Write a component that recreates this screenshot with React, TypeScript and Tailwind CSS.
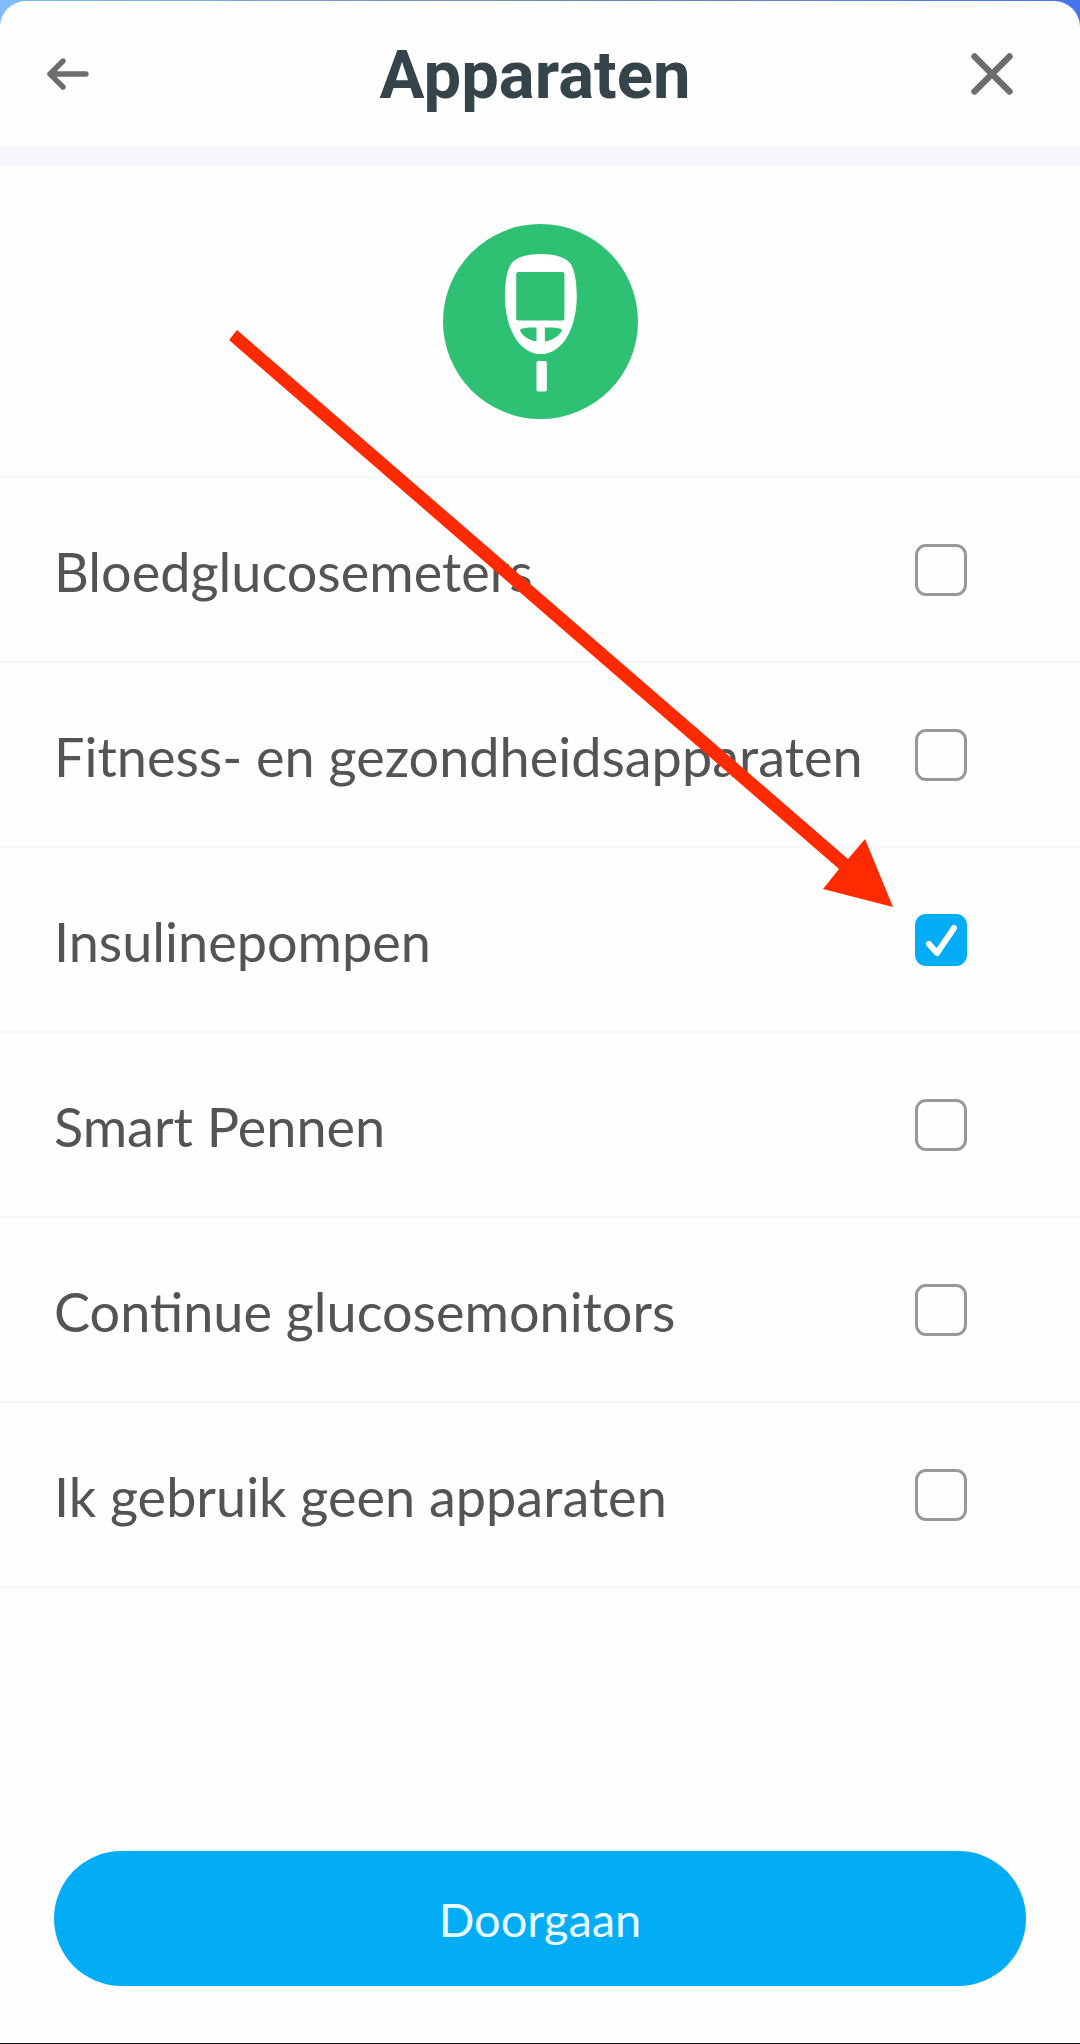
import { useState } from "react";

const devices = [
  { id: "meters", label: "Bloedglucosemeters" },
  { id: "fitness", label: "Fitness- en gezondheidsapparaten" },
  { id: "pumps", label: "Insulinepompen" },
  { id: "pens", label: "Smart Pennen" },
  { id: "cgm", label: "Continue glucosemonitors" },
  { id: "none", label: "Ik gebruik geen apparaten" },
];

function BackIcon() {
  return (
    <svg
      className="w-[42px] h-8"
      viewBox="0 0 42 32"
      fill="none"
      stroke="#6d6d6d"
      strokeWidth="5.4"
      strokeLinecap="round"
      strokeLinejoin="round"
    >
      <path d="M39 16H3M16 3L3 16l13 13" />
    </svg>
  );
}

function CloseIcon() {
  return (
    <svg
      className="size-[42px]"
      viewBox="0 0 42 42"
      fill="none"
      stroke="#6d6d6d"
      strokeWidth="6.4"
      strokeLinecap="round"
    >
      <path d="M3.5 3.5l35 35M38.5 3.5l-35 35" />
    </svg>
  );
}

function MeterIcon() {
  return (
    <svg
      className="size-[195px]"
      viewBox="36 41 586 586"
      fill="#fff"
    >
      <circle cx="329" cy="334" r="293" fill="#2fc173" />
      <path d="M330 131c-46 0-79 11-92 34-11 20-16 58-16 94 0 48 12 98 34 129 20 29 46 44 74 44s54-15 74-44c22-31 34-81 34-129 0-36-5-74-16-94-13-23-46-34-92-34z" />
      <rect x="256" y="185" width="145" height="146" rx="6" fill="#2fc173" />
      <path
        d="M317 352v42c-21-3-39-14-48-30-3-5-1-8 5-9 13-3 27-3 43-3zM342 352v42c21-3 40-14 50-30 3-5 1-8-5-9-13-3-28-3-45-3z"
        fill="#2fc173"
      />
      <rect x="317" y="453" width="31" height="91" rx="5" />
    </svg>
  );
}

function PointerArrow() {
  return (
    <svg
      className="absolute left-[229px] top-[330px] w-[664px] h-[577px] pointer-events-none"
      viewBox="229 330 664 577"
      fill="#ff2a00"
    >
      <path d="M237 330L848 859l17-20 28 68-70-18 16-20L229 340z" />
    </svg>
  );
}

export default function App() {
  const [selected, setSelected] = useState(["pumps"]);

  const toggle = (id: string) =>
    setSelected((prev) =>
      prev.includes(id) ? prev.filter((x) => x !== id) : [...prev, id]
    );

  return (
    <div className="relative min-h-screen flex flex-col pt-px bg-linear-to-r from-[#7fbcfb] via-[#7489a8] to-[#4773ee] font-['Lato',sans-serif] text-[#545454]">
      <main className="flex-1 flex flex-col bg-[#fefefe] rounded-t-[26px] border-b border-[#111]">
        <header className="h-[145px] flex items-center justify-between pl-[47px] pr-[67px]">
          <button type="button" aria-label="Terug" className="w-[52px]">
            <BackIcon />
          </button>
          <h1 className="pt-1 text-[67px] leading-none font-bold font-['Roboto',sans-serif] text-[#35434a]">
            Apparaten
          </h1>
          <button type="button" aria-label="Sluiten">
            <CloseIcon />
          </button>
        </header>
        <div className="h-5 bg-[#f6f6fb]" />
        <div className="flex justify-center pt-[58px] pb-[57px] border-b-2 border-[#f7f7f7]">
          <MeterIcon />
        </div>
        <ul>
          {devices.map(({ id, label }) => (
            <li key={id} className="border-b-2 border-[#f7f7f7]">
              <label
                htmlFor={id}
                className="h-[183px] flex items-center justify-between pl-[54px] pr-[113px] text-[54px] leading-none"
              >
                <span className="pt-1">{label}</span>
                <span className="relative size-[52px] shrink-0">
                  <input
                    id={id}
                    type="checkbox"
                    checked={selected.includes(id)}
                    onChange={() => toggle(id)}
                    className="peer block size-[52px] appearance-none rounded-[11px] border-3 border-[#989898] checked:border-[#03adf5] checked:bg-[#03adf5]"
                  />
                  <svg
                    className="absolute inset-0 hidden peer-checked:block pointer-events-none"
                    viewBox="0 0 52 52"
                    fill="none"
                    stroke="#fff"
                    strokeWidth="6"
                    strokeLinecap="round"
                    strokeLinejoin="round"
                  >
                    <path d="M14 30l8 9 17-25" />
                  </svg>
                </span>
              </label>
            </li>
          ))}
        </ul>
        <div className="mt-auto px-[54px] pb-[57px]">
          <button
            type="button"
            className="w-full h-[135px] pt-0.5 rounded-full bg-[#03adf5] text-[47px] leading-none text-[#e8fcff]"
          >
            Doorgaan
          </button>
        </div>
      </main>
      <PointerArrow />
    </div>
  );
}
